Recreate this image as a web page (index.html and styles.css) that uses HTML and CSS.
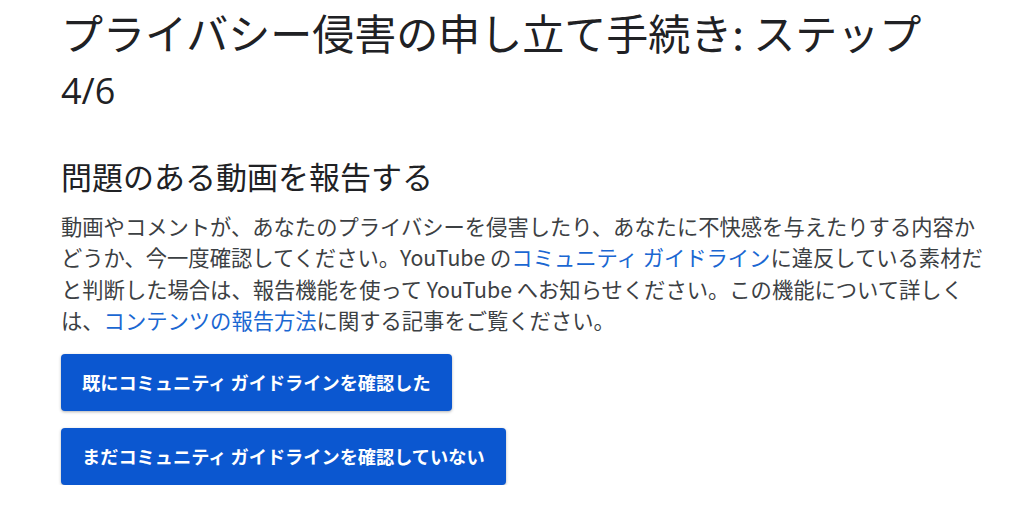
FILE: index.html
```html
<!DOCTYPE html>
<html lang="ja">
<head>
<meta charset="utf-8">
<title>プライバシー侵害の申し立て手続き</title>
<link rel="stylesheet" href="styles.css">
</head>
<body>
<main class="page">
  <h1 class="title">プライバシー侵害の申し立て手続き: ステップ <span class="step">4/6</span></h1>
  <h2 class="subtitle">問題のある動画を報告する</h2>
  <p class="body">動画やコメントが、あなたのプライバシーを侵害したり、あなたに不快感を与えたりする内容かどうか、今一度確認してください。YouTube の<a href="#" class="link">コミュニティ ガイドライン</a>に違反している素材だと判断した場合は、報告機能を使って YouTube へお知らせください。この機能について詳しくは、<a href="#" class="link">コンテンツの報告方法</a>に関する記事をご覧ください。</p>
  <div class="actions">
    <button class="btn">既にコミュニティ ガイドラインを確認した</button>
    <button class="btn">まだコミュニティ ガイドラインを確認していない</button>
  </div>
</main>
</body>
</html>
```
FILE: styles.css
```css
html, body {
  margin: 0;
  padding: 0;
  background: #ffffff;
}
body {
  font-family: "Noto Sans CJK JP", "Noto Sans", sans-serif;
  color: #202124;
}
.page {
  padding: 5px 0 0 61px;
  width: 928px;
}
.title {
  margin: 0;
  max-width: 880px;
  font-size: 42px;
  line-height: 54px;
  font-weight: 400;
  color: #202124;
}
.step {
  font-family: "Open Sans", "Noto Sans", sans-serif;
  font-size: 36px;
  line-height: 1;
}
.subtitle {
  margin: 43px 0 0;
  font-size: 31px;
  line-height: 40px;
  font-weight: 400;
  color: #202124;
}
.body {
  margin: 14px 0 0;
  font-size: 21.3px;
  line-height: 31.4px;
  color: #3c4043;
}
.link {
  color: #1a67d2;
  text-decoration: none;
}
.actions {
  margin-top: 18px;
  display: flex;
  flex-direction: column;
  align-items: flex-start;
  gap: 17px;
}
.btn {
  font-family: "Noto Sans CJK JP", "Noto Sans", sans-serif;
  font-size: 18.2px;
  font-weight: 700;
  color: #ffffff;
  background: #0b57d0;
  border: none;
  border-radius: 4px;
  height: 57px;
  padding: 0 21px;
  box-shadow: 0 1px 3px rgba(0, 0, 0, 0.3);
  cursor: pointer;
}
```
